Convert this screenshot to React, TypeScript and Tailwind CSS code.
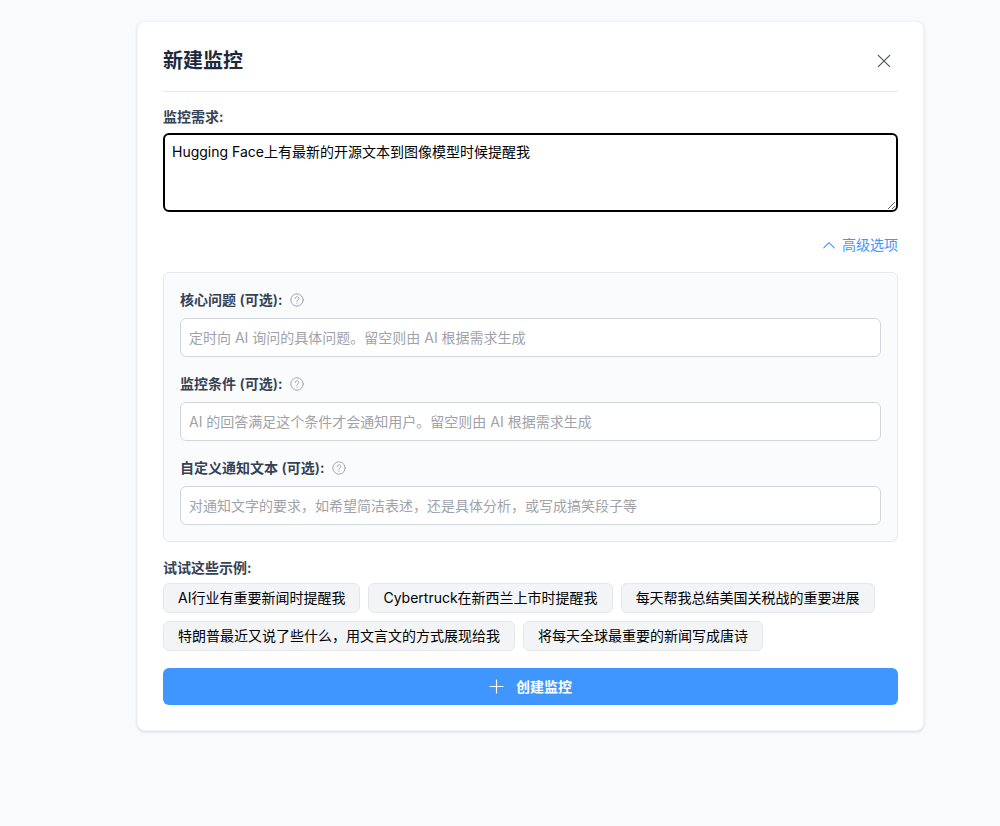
import { useEffect, useRef, useState } from 'react';
import type { FormEvent } from 'react';

const examples = [
  'AI行业有重要新闻时提醒我',
  'Cybertruck在新西兰上市时提醒我',
  '每天帮我总结美国关税战的重要进展',
  '特朗普最近又说了些什么，用文言文的方式展现给我',
  '将每天全球最重要的新闻写成唐诗',
];

const advancedFields = [
  {
    id: 'question',
    label: '核心问题 (可选):',
    placeholder: '定时向 AI 询问的具体问题。留空则由 AI 根据需求生成',
  },
  {
    id: 'condition',
    label: '监控条件 (可选):',
    placeholder: 'AI 的回答满足这个条件才会通知用户。留空则由 AI 根据需求生成',
  },
  {
    id: 'notice',
    label: '自定义通知文本 (可选):',
    placeholder: '对通知文字的要求，如希望简洁表述，还是具体分析，或写成搞笑段子等',
  },
];

function CloseIcon() {
  return (
    <svg viewBox="0 0 14 14" className="h-3.5 w-3.5" fill="none" stroke="currentColor" strokeWidth="1.2" strokeLinecap="round">
      <path d="M1.3 1.3 12.7 12.7M12.7 1.3 1.3 12.7" />
    </svg>
  );
}

function ChevronIcon({ open }: { open: boolean }) {
  return (
    <svg
      viewBox="0 0 12 12"
      className={`h-3 w-3 ${open ? '' : 'rotate-180'}`}
      fill="none"
      stroke="currentColor"
      strokeWidth="1.1"
      strokeLinecap="round"
      strokeLinejoin="round"
    >
      <path d="M.8 8.8 6 3.7l5.2 5.1" />
    </svg>
  );
}

function QuestionIcon() {
  return (
    <svg viewBox="0 0 14 14" className="h-3.5 w-3.5 text-[#9b9da3]" fill="none" stroke="currentColor" strokeLinecap="round">
      <circle cx="7" cy="7" r="6.2" strokeWidth="0.9" />
      <path d="M5.2 5.6c0-1.1.8-1.8 1.8-1.8s1.8.7 1.8 1.7c0 .8-.5 1.2-1 1.5-.5.3-.8.6-.8 1.2v.2" strokeWidth="0.9" />
      <circle cx="7" cy="10.1" r=".6" fill="currentColor" stroke="none" />
    </svg>
  );
}

function PlusIcon() {
  return (
    <svg viewBox="0 0 15 15" className="h-[15px] w-[15px]" fill="none" stroke="currentColor" strokeWidth="1.1" strokeLinecap="round">
      <path d="M7.5 1v13M1 7.5h13" />
    </svg>
  );
}

export default function App() {
  const [demand, setDemand] = useState('Hugging Face上有最新的开源文本到图像模型时候提醒我');
  const [showAdvanced, setShowAdvanced] = useState(true);
  const [values, setValues] = useState<Record<string, string>>({});
  const demandRef = useRef<HTMLTextAreaElement>(null);

  // Start with the cursor at the end of the text
  useEffect(() => {
    const el = demandRef.current;
    if (!el) return;
    el.focus();
    el.setSelectionRange(el.value.length, el.value.length);
  }, []);

  const handleSubmit = (e: FormEvent) => {
    e.preventDefault();
  };

  return (
    <div className="min-h-screen bg-[#f9fafc] pt-[21px] pb-8 pl-[137px] pr-[76px] font-['Inter','Noto_Sans_CJK_SC',sans-serif] text-sm text-black">
      <form
        onSubmit={handleSubmit}
        className="rounded-lg border border-gray-100 bg-white p-[25px] shadow-[0_1px_3px_rgba(0,0,0,0.14)]"
      >
        {/* Header */}
        <div className="flex items-center justify-between border-b border-gray-200 pb-4 mb-[15px]">
          <h1 className="text-xl leading-7 font-semibold text-gray-800">新建监控</h1>
          <button type="button" aria-label="关闭" className="flex h-7 w-7 items-center justify-center text-gray-600">
            <CloseIcon />
          </button>
        </div>

        {/* Demand */}
        <label htmlFor="demand" className="block leading-5 font-semibold text-gray-700 mb-1.5">监控需求:</label>
        <textarea
          id="demand"
          ref={demandRef}
          value={demand}
          onChange={(e) => setDemand(e.target.value)}
          className="block h-[79px] w-full resize-y rounded-md border-2 border-black bg-white px-[7px] py-1.5 leading-[22px] outline-none"
        />

        <div className="flex justify-end mt-[23px] mb-[17px]">
          <button
            type="button"
            onClick={() => setShowAdvanced(!showAdvanced)}
            className="flex items-center gap-[7px] leading-5 text-[#4096ff]"
          >
            <ChevronIcon open={showAdvanced} />
            高级选项
          </button>
        </div>

        {/* Advanced options */}
        {showAdvanced && (
          <div className="space-y-[17px] rounded-md border border-gray-200 bg-[#fafbfc] px-4 pt-[17px] pb-4 mb-4">
            {advancedFields.map((field) => (
              <div key={field.id}>
                <div className="flex items-center gap-2 mb-2">
                  <label htmlFor={field.id} className="leading-5 font-semibold text-gray-700">{field.label}</label>
                  <QuestionIcon />
                </div>
                <input
                  id={field.id}
                  type="text"
                  value={values[field.id] ?? ''}
                  onChange={(e) => setValues({ ...values, [field.id]: e.target.value })}
                  placeholder={field.placeholder}
                  className="block h-[39px] w-full rounded-md border border-gray-300 bg-white px-2 placeholder:text-[#a0a2a9]"
                />
              </div>
            ))}
          </div>
        )}

        {/* Examples */}
        <p className="leading-5 font-semibold text-gray-700 mb-[5px]">试试这些示例:</p>
        <div className="flex flex-wrap gap-2 mb-[17px]">
          {examples.map((text) => (
            <button
              key={text}
              type="button"
              onClick={() => setDemand(text)}
              className="h-[30px] rounded-md border border-gray-200 bg-gray-100 px-3.5"
            >
              {text}
            </button>
          ))}
        </div>

        <button
          type="submit"
          className="flex h-[37px] w-full items-center justify-center gap-3 rounded-md bg-[#4096ff] font-bold text-white"
        >
          <PlusIcon />
          创建监控
        </button>
      </form>
    </div>
  );
}
